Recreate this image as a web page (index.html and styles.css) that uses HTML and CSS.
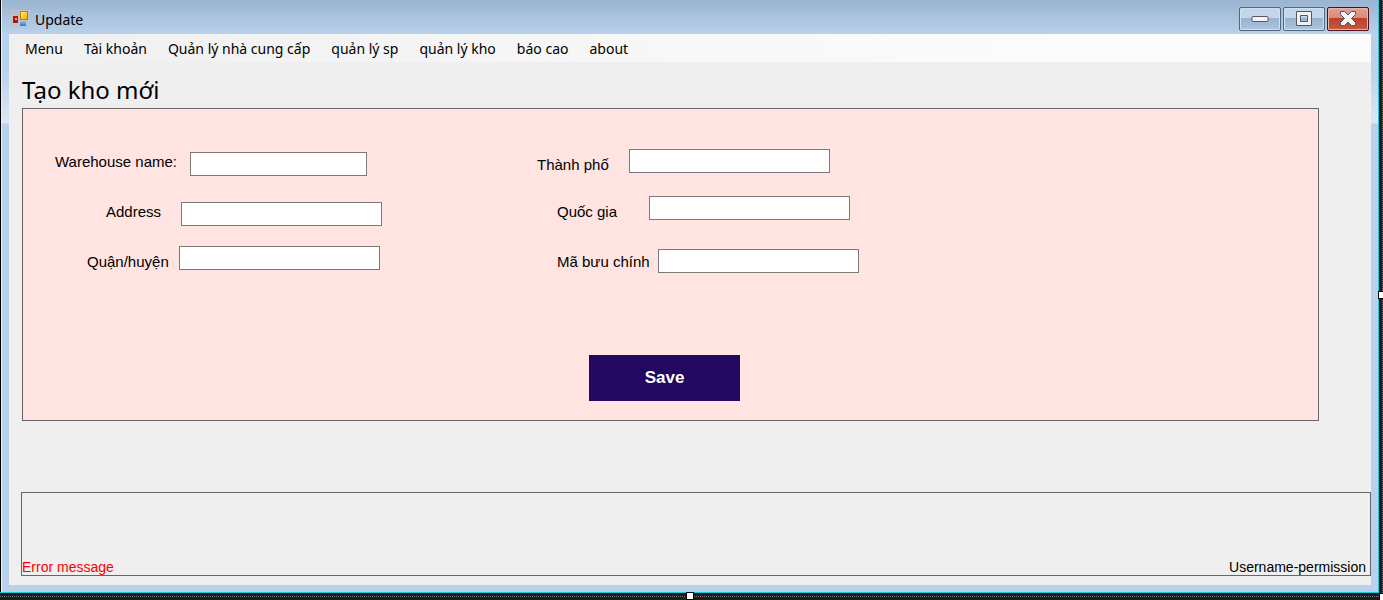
FILE: index.html
```html
<!DOCTYPE html>
<html lang="vi">
<head>
<meta charset="utf-8">
<meta name="viewport" content="width=device-width, initial-scale=1">
<title>Update</title>
<link rel="stylesheet" href="styles.css">
</head>
<body>
<div class="desktop">
  <div class="window">
    <header class="titlebar">
      <svg class="app-icon" width="18" height="18" viewBox="0 0 18 18" aria-hidden="true">
        <defs>
          <linearGradient id="gold" x1="0" y1="0" x2="1" y2="1"><stop offset="0" stop-color="#fff3a0"/><stop offset=".5" stop-color="#ffce2c"/><stop offset="1" stop-color="#e8a800"/></linearGradient>
          <linearGradient id="blue" x1="0" y1="0" x2="0" y2="1"><stop offset="0" stop-color="#8fc0ff"/><stop offset="1" stop-color="#2c6fe0"/></linearGradient>
        </defs>
        <path d="M.5 .5h17v17H.5zM7 .5v17M.5 5h6M.5 14.500h6M7 10.500h10" fill="none" stroke="#c3c3c3"/>
        <rect x="1" y="6" width="5" height="7" fill="#b3140c"/>
        <rect x="3" y="8" width="2" height="2" fill="#ff9c84"/>
        <rect x="8.500" y="1.500" width="7" height="8" fill="url(#gold)" stroke="#b68400"/>
        <rect x="8" y="11" width="6" height="5" fill="url(#blue)"/>
      </svg>
      <h1 class="caption">Update</h1>
      <div class="window-buttons">
        <button type="button" class="window-button" aria-label="Minimize">
          <svg width="18" height="8" viewBox="0 0 18 8"><rect x="1" y="1.500" width="16" height="5" rx="1" fill="#f4f4f4" stroke="#535666"/></svg>
        </button>
        <button type="button" class="window-button" aria-label="Maximize">
          <svg width="18" height="16" viewBox="0 0 18 16"><path d="M1.500 .5h15v14h-15zM5.500 4.500v6h7v-6z" fill="#f0f0f0" fill-rule="evenodd" stroke="#535666" stroke-linejoin="round"/></svg>
        </button>
        <button type="button" class="window-button window-button-close" aria-label="Close">
          <svg width="18" height="16" viewBox="0 0 18 16"><path d="M1.500 .5h4l3.500 3.500 3.500-3.500h4v3l-4 4 4 4v3h-4L9 11l-3.500 3.500h-4v-3l4-4-4-4z" fill="#f5f5f5" stroke="#535666" stroke-linejoin="round"/></svg>
        </button>
      </div>
    </header>
    <main class="client">
      <nav class="menu">
        <a class="menu-item" href="#">Menu</a>
        <a class="menu-item" href="#">Tài khoản</a>
        <a class="menu-item" href="#">Quản lý nhà cung cấp</a>
        <a class="menu-item" href="#">quản lý sp</a>
        <a class="menu-item" href="#">quản lý kho</a>
        <a class="menu-item" href="#">báo cao</a>
        <a class="menu-item" href="#">about</a>
      </nav>
      <h2 class="heading">Tạo kho mới</h2>
      <form class="panel">
        <div class="columns">
          <div class="column column-left">
            <div class="field field-name"><label for="name">Warehouse name:</label><input id="name" type="text"></div>
            <div class="field field-address"><label for="address">Address</label><input id="address" type="text"></div>
            <div class="field field-district"><label for="district">Quận/huyện</label><input id="district" type="text"></div>
          </div>
          <div class="column column-right">
            <div class="field field-city"><label for="city">Thành phố</label><input id="city" type="text"></div>
            <div class="field field-country"><label for="country">Quốc gia</label><input id="country" type="text"></div>
            <div class="field field-postcode"><label for="postcode">Mã bưu chính</label><input id="postcode" type="text"></div>
          </div>
        </div>
        <button type="button" class="save">Save</button>
      </form>
      <footer class="status">
        <span class="error">Error message</span>
        <span class="user">Username-permission</span>
      </footer>
    </main>
  </div>
  <span class="handle handle-right"></span>
  <span class="handle handle-bottom"></span>
  <span class="handle handle-corner"></span>
</div>
</body>
</html>
```
FILE: styles.css
```css
* {
  box-sizing: border-box;
}

body {
  margin: 0;
  color: #000;
  font-family: "Liberation Sans", Arial, sans-serif;
  font-size: 15px;
}

.desktop {
  position: relative;
  display: flex;
  min-height: 100vh;
  padding: 0 4px 7px 0;
  overflow: hidden;
  background:
    repeating-linear-gradient(90deg, #777 0 1px, transparent 1px 2px) 0 calc(100% - 3px) / 100% 1px no-repeat,
    repeating-linear-gradient(#777 0 1px, transparent 1px 2px) 100% 0 / 1px 100% no-repeat,
    #1c1c1c;
}

.window {
  flex: 1;
  display: flex;
  flex-direction: column;
  padding: 0 7px 7px 9px;
  border: solid #1ccbe2;
  border-width: 0 1px 1px 0;
  box-shadow: inset 1px 0 #000, inset 2px 0 #e8f0f8;
  background:
    linear-gradient(#9ab4d1, #b9d1ea 34px, #b9d1ea 70px, #dce8f5 123px, #b9d1ea 124px);
}

.titlebar {
  display: flex;
  align-items: center;
  gap: 5px;
  height: 34px;
  padding: 4px 2px 0 3px;
  font-family: "Noto Sans", sans-serif;
}

.caption {
  flex: 1;
  margin: 0;
  font-size: 14px;
  font-weight: 400;
}

.window-buttons {
  display: flex;
  gap: 2px;
  padding-bottom: 1px;
}

.window-button {
  display: grid;
  place-items: center;
  width: 42px;
  height: 24px;
  padding: 0;
  border: 1px solid #53667f;
  border-radius: 2px;
  box-shadow: inset 0 0 0 1px #d0e0f1;
  background: linear-gradient(#c4d7ea 0 10px, #98b2cf 10px, #aec6de);
}

.window-button-close {
  border-color: #481321;
  box-shadow: inset 0 0 0 1px #e8b3a8;
  background: linear-gradient(#e5a095, #d98879 10px, #b8402a 10px, #c85b3d);
}

.window-button svg {
  display: block;
}

.client {
  flex: 1;
  display: flex;
  flex-direction: column;
  padding-bottom: 9px;
  background: #efefef;
}

.menu {
  display: flex;
  gap: 21px;
  height: 28px;
  padding-left: 16px;
  background: linear-gradient(90deg, #f0f0f0, #fcfcfc 80%);
  font: 14px/30px "Noto Sans", sans-serif;
}

.menu-item {
  color: #000;
  text-decoration: none;
  white-space: nowrap;
}

.heading {
  margin: 12px 13px 2px;
  font: 24px/32px "Noto Sans", sans-serif;
}

.panel {
  margin: 0 52px 71px 13px;
  padding: 40px 0 19px;
  border: 1px solid #666;
  background: #ffe4e1;
}

.columns {
  display: grid;
  grid-template-columns: 514px 1fr;
}

.column {
  display: flex;
  flex-direction: column;
}

.column-left {
  gap: 20px;
  padding: 3px 0 0 32px;
}

.column-right {
  gap: 22px;
}

.field {
  display: flex;
  align-items: flex-start;
}

.field label {
  width: 92px;
  line-height: 18px;
  white-space: nowrap;
}

.field input {
  width: 201px;
  height: 24px;
  padding: 0 4px;
  border: 1px solid #7a7a7a;
  background: #fff;
  font: inherit;
}

.field-name {
  padding-bottom: 6px;
}

.field-name label {
  width: 135px;
}

.field-name input {
  width: 177px;
}

.field-address {
  padding-left: 51px;
}

.field-address label {
  width: 75px;
}

.field-name label,
.field-address label {
  padding-top: 1px;
}

.field-district {
  padding-left: 32px;
}

.field-district label,
.field-city label,
.field-country label {
  padding-top: 7px;
}

.field-country,
.field-postcode {
  padding-left: 20px;
}

.field-postcode {
  padding-top: 6px;
}

.field-postcode label {
  width: 101px;
  padding-top: 4px;
}

.save {
  display: block;
  width: 151px;
  height: 46px;
  margin: 82px 0 0 566px;
  padding: 0;
  border: 0;
  background: #22095f;
  color: #fff;
  font: bold 17px "Liberation Sans", Arial, sans-serif;
}

.status {
  flex: 1;
  display: flex;
  align-items: flex-end;
  justify-content: space-between;
  min-height: 84px;
  margin-left: 12px;
  padding-right: 4px;
  border: 1px solid #666;
  font-size: 14px;
  line-height: 16px;
}

.error {
  color: #f00;
}

.handle {
  position: absolute;
  width: 8px;
  height: 8px;
  border: 1px solid #000;
  background: #fff;
}

.handle-right {
  top: 291px;
  right: -3px;
}

.handle-bottom {
  bottom: 0;
  left: 686px;
}

.handle-corner {
  right: -4px;
  bottom: -1px;
}
```
